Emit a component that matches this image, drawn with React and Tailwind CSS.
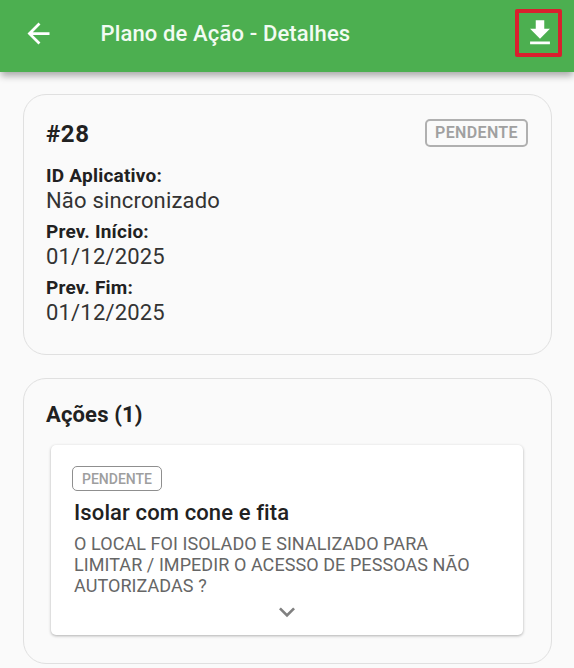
const details = [
  { label: "ID Aplicativo:", value: "Não sincronizado" },
  { label: "Prev. Início:", value: "01/12/2025" },
  { label: "Prev. Fim:", value: "01/12/2025" }
];

function Header() {
  return (
    <header className="relative flex h-[72px] items-center bg-[#4caf50] pl-[22px] pr-[12.5px] pb-[6px] text-white shadow-[0_5px_7px_-1px_rgba(0,0,0,0.32)]">
      <button aria-label="Voltar">
        <svg className="size-[33px]" viewBox="0 0 24 24" fill="currentColor">
          <path d="M20 11H7.83l5.59-5.59L12 4l-8 8 8 8 1.41-1.41L7.83 13H20v-2z" />
        </svg>
      </button>
      <h1 className="ml-[45.5px] mt-[2px] whitespace-nowrap text-[22px] font-medium leading-7 tracking-[0.14px] text-[#f2fbf2]">
        Plano de Ação - Detalhes
      </h1>
      <button
        aria-label="Baixar"
        className="ml-auto flex h-[48px] w-[47px] items-center justify-center rounded-[2px] border-[4.5px] border-[#d9202e] pl-[4px]"
      >
        <svg className="size-[34px] shrink-0" viewBox="0 0 24 24" fill="currentColor">
          <path d="M19 9h-4V3H9v6H5l7 7 7-7zM5 18v2h14v-2H5z" />
        </svg>
      </button>
    </header>
  );
}

function SummaryCard() {
  return (
    <section className="h-[261px] rounded-[23px] border border-[#e0e0e0] pl-[22px] pr-[23px] pt-[23px]">
      <div className="flex items-start justify-between">
        <h2 className="mt-px text-[24px] font-bold leading-[30px] tracking-[0.6px] text-[#212121]">#28</h2>
        <span className="mt-px flex h-7 w-[103px] items-center justify-center rounded-[5px] border-2 border-[#b0b0b0] text-[16px] font-semibold leading-none tracking-[0.35px] text-[#a0a0a0]">
          PENDENTE
        </span>
      </div>
      <dl className="mt-[15px]">
        {details.map((item) => (
          <div key={item.label} className="h-14 whitespace-nowrap">
            <dt className="text-[19px] font-bold leading-6 tracking-[0.22px] text-[#212121]">{item.label}</dt>
            <dd className="text-[22px] leading-[26px] tracking-[0.18px] text-[#333333]">{item.value}</dd>
          </div>
        ))}
      </dl>
    </section>
  );
}

function ActionItem() {
  return (
    <article className="ml-[5px] mr-[6px] mt-[15px] flex h-[190px] flex-col rounded-[5px] bg-white px-[21px] pt-[21px] shadow-[0_1px_3px_rgba(0,0,0,0.3)]">
      <span className="flex h-[25px] w-[90px] items-center justify-center rounded-[5px] border border-[#8f8f8f] text-[14px] font-medium leading-none text-[#9e9e9e]">
        PENDENTE
      </span>
      <h3 className="ml-[2px] mt-[8px] whitespace-nowrap text-[22px] font-medium leading-7 tracking-[0.12px] text-[#212121]">
        Isolar com cone e fita
      </h3>
      <p className="ml-[2px] mt-[6px] whitespace-nowrap text-[18px] leading-[21px] tracking-[0.07px] text-[#666666]">
        O LOCAL FOI ISOLADO E SINALIZADO PARA
        <br />
        LIMITAR / IMPEDIR O ACESSO DE PESSOAS NÃO
        <br />
        AUTORIZADAS ?
      </p>
      <svg className="size-[32px] shrink-0 self-center text-[#808080]" viewBox="0 0 24 24" fill="currentColor">
        <path d="M7.41 8.59 12 13.17l4.59-4.58L18 10l-6 6-6-6 1.41-1.41z" />
      </svg>
    </article>
  );
}

export default function App() {
  return (
    <div className="h-[668px] w-[574px] overflow-hidden bg-[#fafafa] font-[Roboto,sans-serif]">
      <Header />
      <main className="flex flex-col gap-[23px] pl-[23px] pr-[22px] pt-[22px]">
        <SummaryCard />
        <section className="h-[286px] rounded-[23px] border border-[#e0e0e0] px-[22px] pt-[21px]">
          <h2 className="whitespace-nowrap text-[22px] font-bold leading-[30px] tracking-[0.15px] text-[#212121]">Ações (1)</h2>
          <ActionItem />
        </section>
      </main>
    </div>
  );
}
